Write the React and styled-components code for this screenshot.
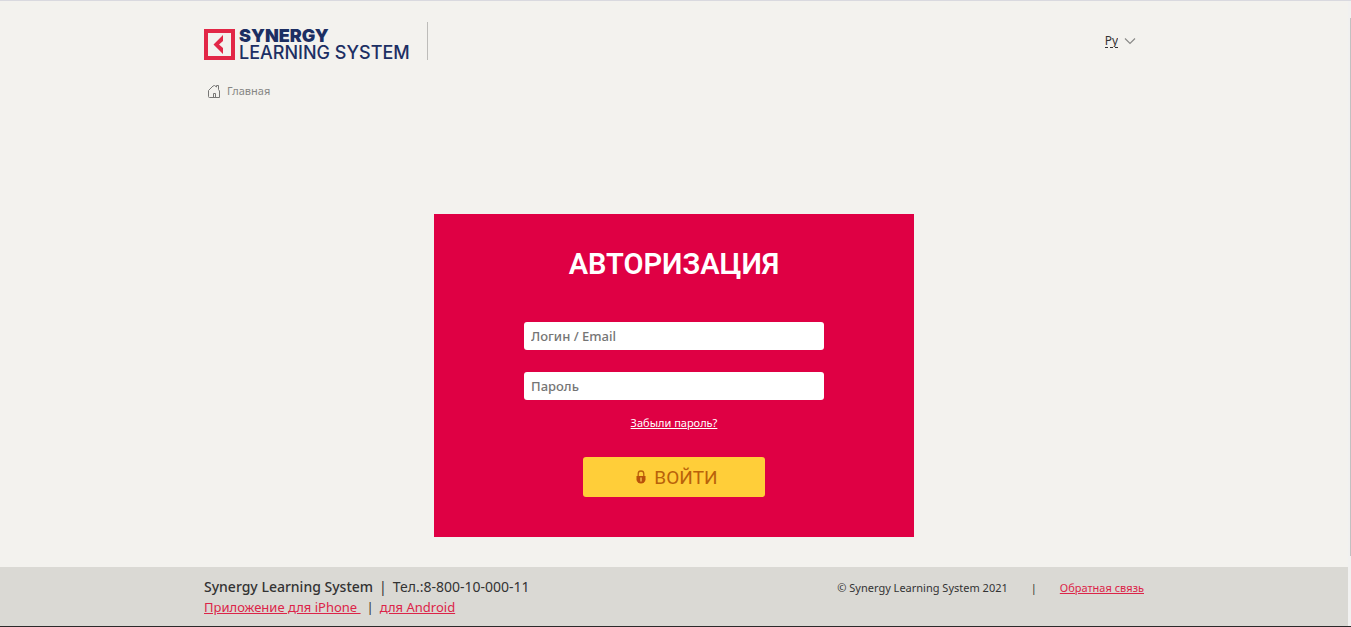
import React, { useState } from "react";
import styled, { createGlobalStyle } from "styled-components";

const App = () => {
    const [lang, setLang] = useState("ru");
    const [login, setLogin] = useState("");
    const [password, setPassword] = useState("");

    return (
        <React.Fragment>
            <GlobalStyle />
            <Window>
                <Page>
                    <Header>
                        <HeaderRow>
                            <Logo href="#" aria-label="Synergy Learning System">
                                <LogoMark viewBox="0 0 31 31" aria-hidden="true">
                                    <rect x="2" y="2" width="27" height="27" fill="none" stroke="#e22746" strokeWidth="4" />
                                    <path d="M19 6v6l-4 3.500 4 3.500v6l-9.500-9.500z" fill="#e22746" />
                                </LogoMark>
                                <LogoText>
                                    <LogoTop>SYNERGY</LogoTop>
                                    <LogoBottom>LEARNING SYSTEM</LogoBottom>
                                </LogoText>
                            </Logo>
                            <Language>
                                <LanguageSelect
                                    aria-label="Язык"
                                    value={lang}
                                    onChange={(e) => setLang(e.target.value)}
                                >
                                    <option value="ru">Ру</option>
                                    <option value="en">En</option>
                                </LanguageSelect>
                                <Arrow viewBox="0 0 12 8" aria-hidden="true">
                                    <path d="M1 1.5l5 5 5-5" fill="none" stroke="#8a8a88" strokeWidth="1.2" />
                                </Arrow>
                            </Language>
                        </HeaderRow>
                        <Breadcrumb href="#">
                            <HomeIcon viewBox="0 0 12 13" aria-hidden="true">
                                <path
                                    d="M.5 5.5L5 1l1.500-.5 2 1.500V.5h2v4l1 1.500v6.500H1.500q-1 0-1-1zM5.500 12.500v-4h2v4"
                                    fill="none"
                                    stroke="#777775"
                                />
                            </HomeIcon>
                            Главная
                        </Breadcrumb>
                    </Header>

                    <Content>
                        <LoginForm onSubmit={(e) => e.preventDefault()}>
                            <Title>АВТОРИЗАЦИЯ</Title>
                            <Field
                                type="text"
                                aria-label="Логин / Email"
                                placeholder="Логин / Email"
                                value={login}
                                onChange={(e) => setLogin(e.target.value)}
                            />
                            <Field
                                type="password"
                                aria-label="Пароль"
                                placeholder="Пароль"
                                value={password}
                                onChange={(e) => setPassword(e.target.value)}
                            />
                            <Forgot href="#">Забыли пароль?</Forgot>
                            <SubmitButton type="submit">
                                <LockIcon viewBox="0 0 10 14" aria-hidden="true">
                                    <path d="M2.2 7V3.8a2.8 2.8 0 0 1 5.6 0V7" fill="none" stroke="#b9620a" strokeWidth="1.3" />
                                    <path d="M.5 6h9v3.500a4.500 4 0 0 1-9 0z" fill="#b9520a" />
                                    <path d="M5 7.500v4" stroke="#ffd35e" strokeWidth="1.2" />
                                </LockIcon>
                                ВОЙТИ
                            </SubmitButton>
                        </LoginForm>
                    </Content>

                    <Footer>
                        <FooterInner>
                            <Contacts>
                                <Phone>
                                    <strong>Synergy Learning System</strong>
                                    <Divider>|</Divider>
                                    Тел.:8-800-10-000-11
                                </Phone>
                                <div>
                                    <FooterLink href="#">Приложение для iPhone&nbsp;</FooterLink>
                                    <Divider>|</Divider>
                                    <FooterLink href="#">для Android</FooterLink>
                                </div>
                            </Contacts>
                            <Copyright>
                                <span>© Synergy Learning System 2021</span>
                                <span>|</span>
                                <FooterLink href="#">Обратная связь</FooterLink>
                            </Copyright>
                        </FooterInner>
                    </Footer>
                </Page>
                <ScrollTrack />
            </Window>
        </React.Fragment>
    );
};

export default App;

const GlobalStyle = createGlobalStyle`
    * {
        box-sizing: border-box;
    }
    body {
        margin: 0;
        background: #f3f2ee;
        color: #333333;
        font-family: "Noto Sans", "Open Sans", sans-serif;
        font-size: 11px;
    }
`;

const Window = styled.div`
    display: flex;
    min-height: 100vh;
    border-top: 1px solid #d9d9df;
    border-bottom: 1px solid #2b2a2a;
`;

const Page = styled.div`
    display: flex;
    flex: 1;
    flex-direction: column;
`;

const ScrollTrack = styled.div`
    width: 3px;
    background: linear-gradient(#c1c1c1, #c1c1c1) right 17px / 1px calc(100% - 87px) no-repeat, #f1f1f0;
`;

const Header = styled.header`
    width: 100%;
    max-width: 940px;
    margin: 0 auto;
    padding-top: 21px;
`;

const HeaderRow = styled.div`
    display: flex;
    justify-content: space-between;
    align-items: center;
    height: 38px;
`;

const Logo = styled.a`
    display: flex;
    align-items: flex-end;
    height: 38px;
    padding-right: 16px;
    border-right: 1px solid #bdbcb9;
    color: #1c2f63;
    text-decoration: none;
`;

const LogoMark = styled.svg`
    width: 31px;
    height: 31px;
    margin-right: 4px;
`;

const LogoText = styled.span`
    display: flex;
    flex-direction: column;
    width: 172px;
    margin-bottom: -1px;
    font-family: Inter, sans-serif;
    font-size: 18px;
    line-height: 17px;
    white-space: nowrap;
`;

const LogoTop = styled.span`
    font-weight: 900;
`;

const LogoBottom = styled.span`
    font-weight: 500;
`;

const Language = styled.div`
    display: flex;
    align-items: center;
    gap: 6px;
    padding-right: 8px;
`;

const LanguageSelect = styled.select`
    appearance: none;
    field-sizing: content;
    height: 14px;
    padding: 0;
    border: 0;
    border-bottom: 1px dashed #333333;
    border-radius: 0;
    background: transparent;
    color: #333333;
    font-family: inherit;
    font-size: 12px;
    line-height: 13px;
`;

const Arrow = styled.svg`
    width: 12px;
    height: 8px;
`;

const Breadcrumb = styled.a`
    display: inline-flex;
    align-items: center;
    gap: 7px;
    margin-top: 22px;
    padding-left: 4px;
    color: #868684;
    line-height: 18px;
    text-decoration: none;
`;

const HomeIcon = styled.svg`
    width: 12px;
    height: 13px;
`;

const Content = styled.main`
    display: flex;
    flex: 1;
    justify-content: center;
    align-items: flex-end;
    padding: 30px 0;
`;

const LoginForm = styled.form`
    display: flex;
    flex-direction: column;
    align-items: center;
    width: 480px;
    padding: 30px 90px 40px;
    background: #df0044;
`;

const Title = styled.h1`
    margin: 0 0 38px;
    color: #ffffff;
    font-family: Roboto, sans-serif;
    font-size: 29px;
    font-weight: 600;
    line-height: 40px;
`;

const Field = styled.input`
    width: 100%;
    height: 28px;
    margin-bottom: 22px;
    padding: 0 7px;
    border: 0;
    border-radius: 3px;
    background: #ffffff;
    color: #333333;
    font-family: inherit;
    font-size: 13px;
    font-weight: 500;

    &::placeholder {
        color: #757575;
        opacity: 1;
    }
`;

const Forgot = styled.a`
    margin: -8px 0 25px;
    color: #ffffff;
    line-height: 18px;
`;

const SubmitButton = styled.button`
    display: flex;
    justify-content: center;
    align-items: center;
    gap: 8px;
    width: 182px;
    height: 40px;
    padding: 0 0 0 6px;
    border: 0;
    border-radius: 3px;
    background: #ffce39;
    color: #b9620a;
    font-family: Roboto, sans-serif;
    font-size: 19px;
    cursor: pointer;
`;

const LockIcon = styled.svg`
    width: 10px;
    height: 14px;
`;

const Footer = styled.footer`
    background: #dad9d4;
`;

const FooterInner = styled.div`
    display: flex;
    justify-content: space-between;
    width: 100%;
    max-width: 940px;
    margin: 0 auto;
    padding: 10px 0 9px;
`;

const Contacts = styled.div`
    font-size: 13px;
    line-height: 20px;
`;

const Phone = styled.div`
    font-size: 14px;

    strong {
        font-weight: 500;
    }
`;

const Divider = styled.span`
    margin: 0 6px;
`;

const FooterLink = styled.a`
    color: #dc2448;
`;

const Copyright = styled.div`
    display: flex;
    gap: 23px;
    line-height: 22px;
`;
